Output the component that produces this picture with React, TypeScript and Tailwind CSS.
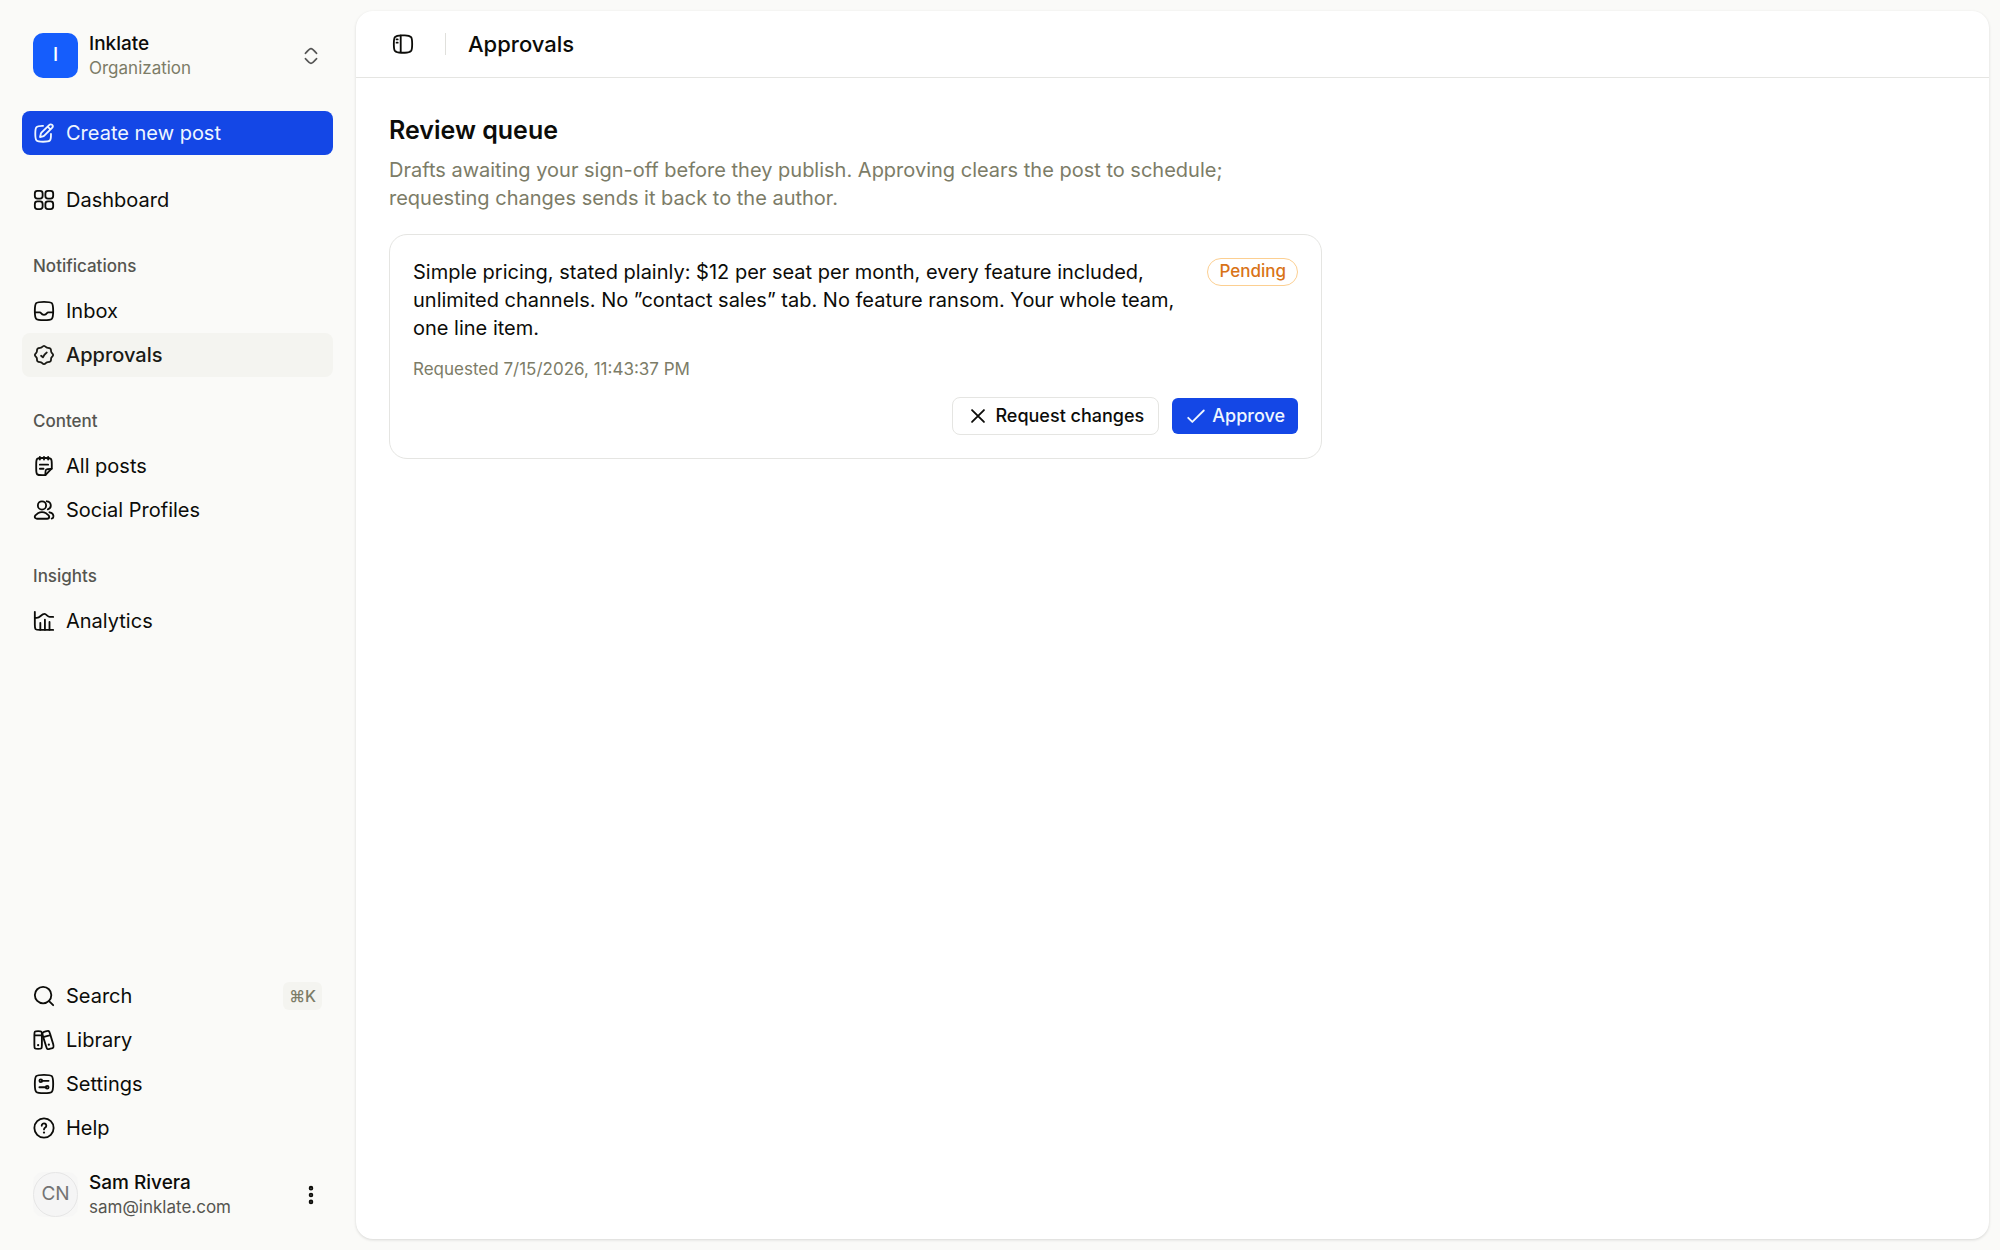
import type { ReactNode } from 'react'

type IconProps = { className?: string; children: ReactNode }

function Icon({ className = 'size-[22px]', children }: IconProps) {
  return (
    <svg
      viewBox="0 0 24 24"
      fill="none"
      stroke="currentColor"
      strokeWidth="2"
      strokeLinecap="round"
      strokeLinejoin="round"
      aria-hidden="true"
      className={`shrink-0 ${className}`}
    >
      {children}
    </svg>
  )
}

const icons = {
  edit: (
    <Icon>
      <path d="M11 4.2C7.2 4.1 5 4.3 3.8 5.6 2.5 6.9 2.5 9 2.5 12.9s0 5.9 1.3 7.2c1.2 1.3 3.3 1.4 7.2 1.4s6 0 7.3-1.3c1.2-1.2 1.4-3.3 1.3-7.2" />
      <path d="M9.2 11.7 17.6 3.3c1-1 2.4-1 3.3-.1.9.9.8 2.3-.1 3.2l-8.5 8.5c-.5.5-1 .7-1.6.8l-3 .7.7-3.1c.1-.6.4-1.2.8-1.6ZM16 5l3 3" />
    </Icon>
  ),
  grid: (
    <Icon>
      <rect x="2" y="2" width="8.5" height="8.5" rx="2.8" />
      <rect x="13.5" y="2" width="8.5" height="8.5" rx="2.8" />
      <rect x="2" y="13.5" width="8.5" height="8.5" rx="2.8" />
      <rect x="13.5" y="13.5" width="8.5" height="8.5" rx="2.8" />
    </Icon>
  ),
  inbox: (
    <Icon>
      <path d="M2 12c0-4.7 0-7 1.5-8.5S7.3 2 12 2s7 0 8.5 1.5S22 7.3 22 12s0 7-1.5 8.5S16.7 22 12 22s-7 0-8.5-1.5S2 16.7 2 12Z" />
      <path d="M22 13.5h-5.2c-.8 0-1.3.4-1.7 1-.6 1-1.7 1.7-3.1 1.7s-2.5-.7-3.1-1.7c-.4-.6-.9-1-1.7-1H2" />
    </Icon>
  ),
  badge: (
    <Icon>
      <path d="M19 5c.6.6.7 1.3.7 2.7 0 1 .1 1.3.8 2 1 1 1.500 1.500 1.500 2.300s-.5 1.300-1.500 2.300c-.7.7-.8 1-.8 2 0 1.400-.1 2.100-.7 2.700s-1.300.7-2.700.7c-1 0-1.300.1-2 .8-1 1-1.500 1.500-2.300 1.500s-1.300-.5-2.300-1.500c-.7-.7-1-.8-2-.8-1.400 0-2.100-.1-2.700-.7s-.7-1.300-.7-2.700c0-1-.1-1.300-.8-2C2.500 13.300 2 12.800 2 12s.5-1.300 1.500-2.300c.7-.7.8-1 .8-2 0-1.400.1-2.100.7-2.700s1.300-.7 2.700-.7c1 0 1.300-.1 2-.8C10.700 2.500 11.200 2 12 2s1.300.5 2.300 1.500c.7.7 1 .8 2 .8 1.400 0 2.100.1 2.700.7Z" />
      <path d="m8.8 12.8 2 1.7c1-2.300 2.300-4 4.200-5.300" />
    </Icon>
  ),
  note: (
    <Icon>
      <path d="M16.5 2v3M12 2v3M7.5 2v3M7.5 15h4M7.5 10.5h9" />
      <path d="M3.5 10c0-3.100 0-4.700 1-5.700s2.500-1 5.600-1h3.800c3.100 0 4.600 0 5.600 1s1 2.600 1 5.700v4.500l-7 7.500h-3.400c-3.100 0-4.600 0-5.600-1s-1-2.600-1-5.700V10Z" />
      <path d="M13.5 22v-1.500c0-2.500 0-3.800.8-4.600s2-.8 4.600-.8h1.500" />
    </Icon>
  ),
  users: (
    <Icon>
      <circle cx="9.8" cy="7" r="4.5" />
      <path d="M15 2.500a4.500 4.500 0 0 1 1.200 8.800M5.300 15.600c2.700-1.600 6.300-1.600 9 0 1.300.8 3.400 2 3.400 3.700 0 1.300-1.100 2.200-2.400 2.200H4.300c-1.300 0-2.400-.9-2.400-2.200 0-1.700 2.100-2.900 3.400-3.700ZM18 14.500c1.600.3 4.200 1.700 4.300 4.200.1 1.200-.7 2.300-1.900 2.600" />
    </Icon>
  ),
  chart: (
    <Icon>
      <path d="M2 2v14c0 2.500 0 4 .8 4.900.9.8 2.100.8 4.700.8H22" />
      <path d="M2 8.500h2.100c1.500 0 3-.8 4.200-1.900 1.400-1.300 2.900-2.300 4.400-2.300 1.900 0 3.200 3.200 5.500 3.200H22" />
      <path d="M8 21.500V14M13 21.500v-11M18 21.500V13" />
    </Icon>
  ),
  search: (
    <Icon>
      <circle cx="11" cy="11" r="9" />
      <path d="m17.5 17.5 4.500 4.500" />
    </Icon>
  ),
  library: (
    <Icon>
      <path d="M1.500 6.500c0-2 0-3 .6-3.600s1.600-.6 3.500-.6 2.900 0 3.500.6.6 1.600.6 3.600v11c0 2 0 3-.6 3.600s-1.600.6-3.500.6-2.900 0-3.500-.6-.6-1.600-.6-3.600v-11ZM1.500 7h8" />
      <path d="M10.800 7.800c-.5-2-.7-3-.2-3.700s1.400-1 3.200-1.500 2.700-.7 3.400-.3 1 1.300 1.500 3.300l3.300 10.800c.5 2 .7 3 .2 3.700s-1.400 1-3.200 1.400-2.600.7-3.300.3-1-1.400-1.500-3.300L10.800 7.800ZM11 8.800l8-2" />
      <path d="M5.600 17.500v.1M17.300 17v.1" strokeWidth="2.4" />
    </Icon>
  ),
  settings: (
    <Icon>
      <path d="M2 12c0-4.7 0-7 1.500-8.500S7.300 2 12 2s7 0 8.500 1.500S22 7.300 22 12s0 7-1.500 8.500S16.700 22 12 22s-7 0-8.500-1.500S2 16.700 2 12Z" />
      <circle cx="8.5" cy="8.5" r="1.5" />
      <circle cx="15.5" cy="15.5" r="1.5" />
      <path d="M10 8.500h7M14 15.500H7" />
    </Icon>
  ),
  help: (
    <Icon>
      <circle cx="12" cy="12" r="10.5" />
      <path d="M9.500 9.500a2.500 2.500 0 1 1 3.900 2c-.7.5-1.400 1.100-1.400 2" />
      <path d="M12 16.900v.1" strokeWidth="2.4" />
    </Icon>
  ),
}

type NavItem = { label: string; icon: keyof typeof icons; active?: boolean; shortcut?: string }

const navGroups: { title?: string; items: NavItem[] }[] = [
  { items: [{ label: 'Dashboard', icon: 'grid' }] },
  {
    title: 'Notifications',
    items: [
      { label: 'Inbox', icon: 'inbox' },
      { label: 'Approvals', icon: 'badge', active: true },
    ],
  },
  {
    title: 'Content',
    items: [
      { label: 'All posts', icon: 'note' },
      { label: 'Social Profiles', icon: 'users' },
    ],
  },
  { title: 'Insights', items: [{ label: 'Analytics', icon: 'chart' }] },
]

const footerItems: NavItem[] = [
  { label: 'Search', icon: 'search', shortcut: '⌘K' },
  { label: 'Library', icon: 'library' },
  { label: 'Settings', icon: 'settings' },
  { label: 'Help', icon: 'help' },
]

function NavLink({ item }: { item: NavItem }) {
  return (
    <a
      href="#"
      className={`flex h-11 items-center gap-[11px] rounded-lg px-[11px] ${
        item.active ? 'bg-[#f4f4f0] font-medium text-[#1b1b16]' : 'text-[#0c0c09]'
      }`}
    >
      {icons[item.icon]}
      <span className="flex-1">{item.label}</span>
      {item.shortcut && (
        <kbd className="flex h-7 items-center rounded-md bg-[#f4f4f0] px-[6px] font-[Inter,'DejaVu_Sans',sans-serif] text-base font-medium text-[#7c7c67]">
          {item.shortcut}
        </kbd>
      )}
    </a>
  )
}

function Sidebar() {
  return (
    <aside className="flex w-[356px] shrink-0 flex-col py-[22px] pr-[23px] pl-[22px]">
      <button type="button" className="flex h-[67px] items-center gap-[11px] px-[11px] text-left text-[19px]">
        <span className="flex size-[45px] items-center justify-center rounded-[10px] bg-[#155dfc] font-medium text-white">
          I
        </span>
        <span className="flex flex-1 flex-col">
          <span className="leading-6 font-medium">Inklate</span>
          <span className="text-[17px] leading-6 text-[#7c7c67]">Organization</span>
        </span>
        <Icon className="size-[22px] text-[#555]">
          <path d="M18 9s-4.400-5-6-5-6 5-6 5M18 15s-4.400 5-6 5-6-5-6-5" />
        </Icon>
      </button>

      <button
        type="button"
        className="mt-[22px] flex h-11 items-center gap-[11px] rounded-lg bg-[#1447e6] px-[11px] text-[#eff6ff]"
      >
        {icons.edit}
        Create new post
      </button>

      <nav className="mt-[23px] flex flex-col gap-[23px]">
        {navGroups.map((group, i) => (
          <div key={i}>
            {group.title && (
              <h2 className="flex h-11 items-center px-[11px] text-[17px] font-medium text-[#555550]">
                {group.title}
              </h2>
            )}
            {group.items.map((item) => (
              <NavLink key={item.label} item={item} />
            ))}
          </div>
        ))}
      </nav>

      <nav className="mt-auto flex flex-col">
        {footerItems.map((item) => (
          <NavLink key={item.label} item={item} />
        ))}
      </nav>

      <button
        type="button"
        className="mt-[11px] flex h-[67px] items-center gap-[11px] px-[11px] text-left text-[19px]"
      >
        <span className="rounded-[10px] bg-[#f7f7f6]">
          <span className="flex size-[45px] items-center justify-center rounded-full border border-[#e6e6e6] bg-[#f5f5f5] text-[#737373]">
            CN
          </span>
        </span>
        <span className="flex flex-1 flex-col">
          <span className="leading-6 font-medium">Sam Rivera</span>
          <span className="text-[17px] leading-6 text-[#555550]">sam@inklate.com</span>
        </span>
        <Icon className="size-[22px]">
          <circle cx="12" cy="4.5" r="1.5" />
          <circle cx="12" cy="12" r="1.5" />
          <circle cx="12" cy="19.5" r="1.5" />
        </Icon>
      </button>
    </aside>
  )
}

function ReviewCard() {
  return (
    <article className="mt-[22px] rounded-[18px] border border-[#e5e5e2] p-[23px]">
      <div className="flex items-start gap-[22px]">
        <p className="flex-1 leading-7">
          Simple pricing, stated plainly: $12 per seat per month, every feature included, unlimited channels. No
          ”contact sales” tab. No feature ransom. Your whole team, one line item.
        </p>
        <span className="flex h-7 items-center rounded-full border border-[#fccf91] px-[11px] text-[17px] font-medium text-[#d97316]">
          Pending
        </span>
      </div>
      <p className="mt-[15px] text-[17px] leading-6 text-[#7c7c67]">Requested 7/15/2026, 11:43:37 PM</p>
      <div className="mt-4 flex items-center justify-end gap-[13px]">
        <button
          type="button"
          className="flex h-[38px] items-center gap-[6px] rounded-lg border border-[#e5e5e2] px-[14px] text-lg font-medium"
        >
          <Icon className="size-[22px]">
            <path d="m18.5 5.5-13 13M18.5 18.5l-13-13" />
          </Icon>
          Request changes
        </button>
        <button
          type="button"
          className="flex h-9 items-center gap-[5px] rounded-md bg-[#1447e6] px-[13px] text-lg font-medium text-[#eff6ff]"
        >
          <Icon className="size-[22px]">
            <path d="M3.5 14 8 18.5 20.5 6" />
          </Icon>
          Approve
        </button>
      </div>
    </article>
  )
}

export default function App() {
  return (
    <div className="flex min-h-screen bg-[#fafaf8] font-[Inter,sans-serif] text-xl text-[#0c0c09]">
      <Sidebar />
      <main className="my-[11px] mr-[11px] flex-1 rounded-[17px] bg-white shadow-[0_1px_3px_rgba(0,0,0,0.14)]">
        <header className="flex h-[67px] items-center border-b border-[#e5e5e2] px-[33px]">
          <button type="button" aria-label="Toggle sidebar" className="flex size-7 items-center justify-center">
            <Icon>
              <path d="M2 12c0-4.100 0-6.100 1.200-7.500C5 2.500 7.500 2.500 10 2.500h4c2.500 0 5 0 6.800 2C22 5.900 22 7.900 22 12s0 6.100-1.200 7.500c-1.800 2-4.300 2-6.800 2h-4c-2.500 0-5 0-6.800-2C2 18.100 2 16.100 2 12ZM9.500 2.500v19M5 7h1.200M5 10.500h1.200" />
            </Icon>
          </button>
          <div className="ml-[28px] h-[22px] w-px bg-[#e0e0dc]" />
          <h1 className="ml-[22px] text-[22px] font-medium">Approvals</h1>
        </header>
        <section className="px-[33px] py-[34px]">
          <div className="max-w-[933px]">
            <h2 className="text-[25px] leading-9 font-semibold">Review queue</h2>
            <p className="mt-2 leading-7 text-[#7c7c67]">
              Drafts awaiting your sign-off before they publish. Approving clears the post to schedule; requesting
              changes sends it back to the author.
            </p>
            <ReviewCard />
          </div>
        </section>
      </main>
    </div>
  )
}
